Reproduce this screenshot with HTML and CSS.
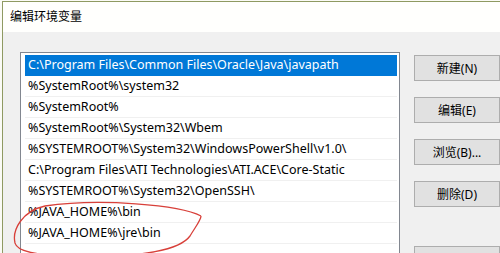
FILE: index.html
```html
<!DOCTYPE html>
<html lang="zh-CN">
<head>
    <meta charset="UTF-8">
    <title>编辑环境变量</title>
    <link rel="stylesheet" href="styles.css">
</head>
<body>
    <div class="window">
        <div class="titlebar">编辑环境变量</div>
        <div class="content">
            <ul class="pathlist">
                <li class="selected">C:\Program Files\Common Files\Oracle\Java\javapath</li>
                <li>%SystemRoot%\system32</li>
                <li>%SystemRoot%</li>
                <li>%SystemRoot%\System32\Wbem</li>
                <li>%SYSTEMROOT%\System32\WindowsPowerShell\v1.0\</li>
                <li>C:\Program Files\ATI Technologies\ATI.ACE\Core-Static</li>
                <li>%SYSTEMROOT%\System32\OpenSSH\</li>
                <li>%JAVA_HOME%\bin</li>
                <li>%JAVA_HOME%\jre\bin</li>
                <li></li>
            </ul>
            <div class="buttons">
                <button>新建(N)</button>
                <button>编辑(E)</button>
                <button>浏览(B)...</button>
                <button>删除(D)</button>
                <button class="spaced"></button>
            </div>
        </div>
    </div>
    <!-- hand drawn mark around the two java rows -->
    <svg class="mark" width="500" height="253" viewBox="0 0 500 253">
        <path d="M201,216 C180,205 100,198 45,206 C22,211 12,230 15,243 C18,253 40,256 90,256 C140,257 180,250 190,236 C196,226 201,220 201,216"
              fill="none" stroke="#d8403a" stroke-width="1.3"/>
    </svg>
</body>
</html>
```

FILE: styles.css
```css
html, body {
    margin: 0;
    padding: 0;
}

body {
    width: 500px;
    height: 253px;
    overflow: hidden;
    position: relative;
    background-color: #fbfbf6;
    font-family: "Noto Sans", "Noto Sans CJK SC", sans-serif;
    font-size: 12.5px;
    color: #000;
}

.window {
    margin-left: 2px;
    margin-top: 1px;
    border-left: 1px solid #8f9a62;
    border-top: 1px solid #8f9a62;
    height: 252px;
    overflow: hidden;
    background-color: #f0f0f0;
}

.titlebar {
    height: 30px;
    line-height: 30px;
    padding-left: 7px;
    background-color: #fffffd;
    font-size: 12px;
}

.content {
    display: flex;
    padding: 20px 0 0 17px;
}

.pathlist {
    list-style-type: none;
    margin: 0;
    width: 386px;
    padding: 2px 2px 0 4px;
    border: 1px solid #828790;
    background-color: #fff;
}

.pathlist li {
    height: 20px;
    line-height: 20px;
    padding-left: 3px;
    border-bottom: 1px solid #f0f0f0;
    white-space: nowrap;
}

.pathlist li.selected {
    background-color: #0078d7;
    color: #fff;
    border-bottom-color: #0078d7;
}

.buttons {
    display: flex;
    flex-direction: column;
    gap: 16px;
    margin-left: 14px;
    padding-top: 3px;
}

button {
    width: 86px;
    height: 26px;
    padding: 0;
    background-color: #e1e1e1;
    border: 1px solid #adadad;
    font-family: inherit;
    font-size: 12px;
    color: #000;
}

button.spaced {
    margin-top: 23px;
}

.mark {
    position: absolute;
    left: 0;
    top: 0;
}
```
